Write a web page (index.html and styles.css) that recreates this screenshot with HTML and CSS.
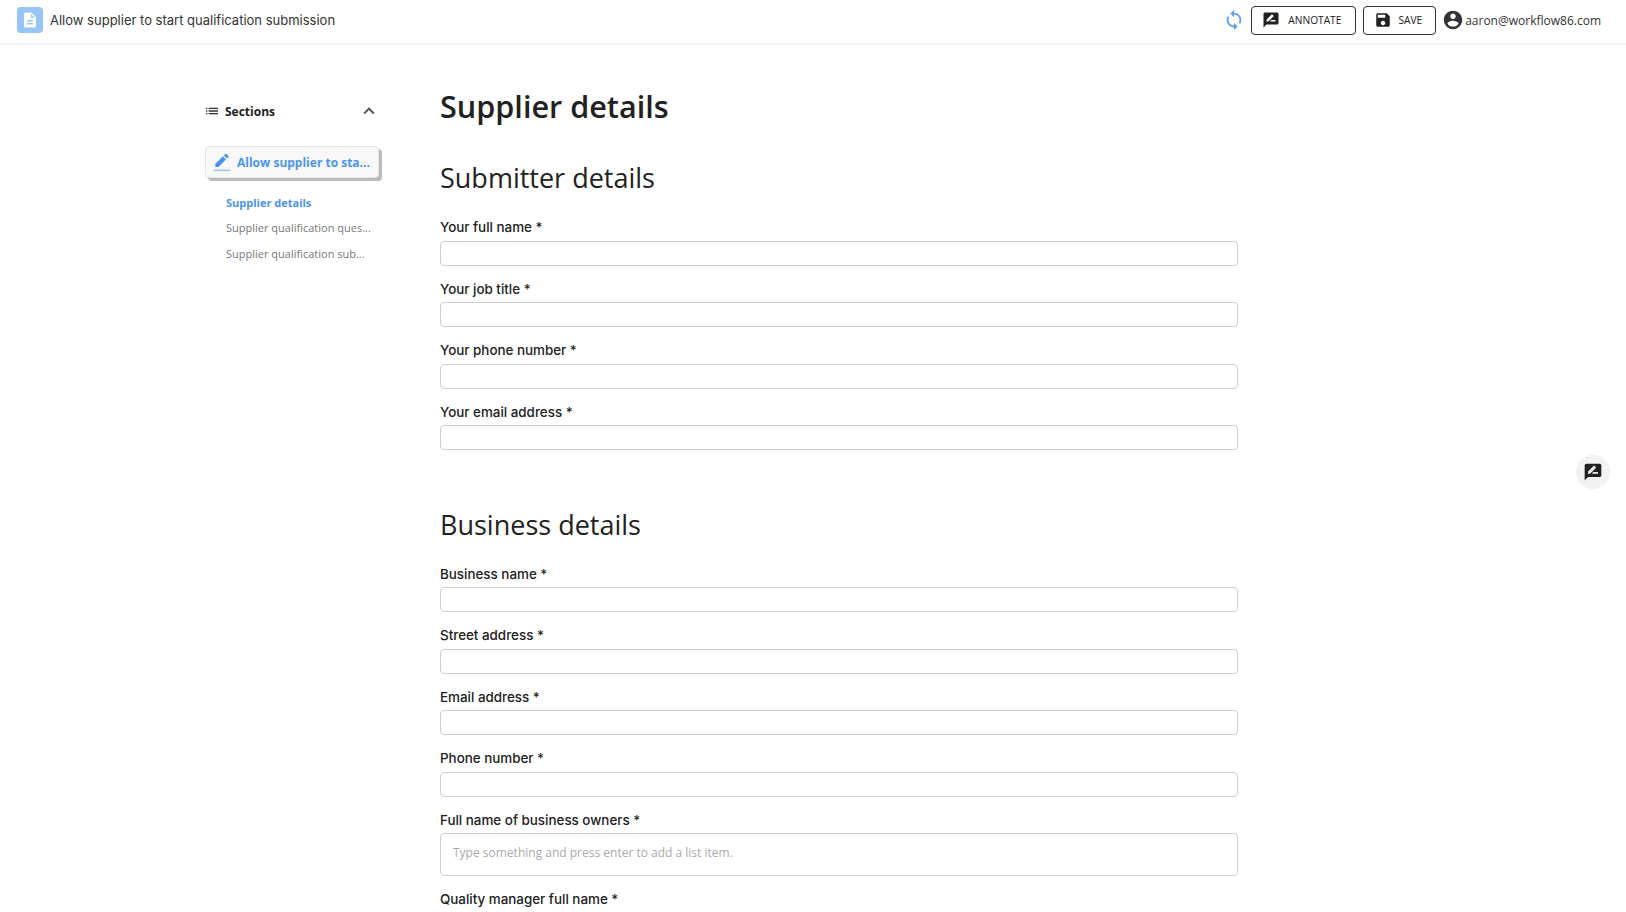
FILE: index.html
```html
<!doctype html>
<html>
  <head>
    <meta charset="utf-8">
    <title>Supplier details</title>
    <link rel="stylesheet" href="styles.css">
  </head>
  <body>
    <header class="topbar">
      <div class="doc_icon">
        <svg viewBox="0 0 24 24" width="18" height="18"><path fill="#fff" d="M14 2H6c-1.100 0-2 .9-2 2v16c0 1.100.9 2 2 2h12c1.100 0 2-.9 2-2V8l-6-6zm2 16H8v-2h8v2zm0-4H8v-2h8v2zm-3-5V3.500L18.500 9H13z"/></svg>
      </div>
      <span class="doc_title">Allow supplier to start qualification submission</span>
      <div class="top_actions">
        <svg class="sync" viewBox="0 0 24 24" width="22" height="22"><path fill="#5aa2f0" d="M12 4V1L8 5l4 4V6c3.310 0 6 2.690 6 6 0 1.010-.25 1.970-.7 2.800l1.460 1.460C19.540 15.030 20 13.570 20 12c0-4.420-3.580-8-8-8zm0 14c-3.310 0-6-2.690-6-6 0-1.010.25-1.970.7-2.800L5.240 7.740C4.460 8.970 4 10.430 4 12c0 4.420 3.580 8 8 8v3l4-4-4-4v3z"/></svg>
        <button class="top_btn">
          <svg viewBox="0 0 24 24" width="18" height="18"><path fill="#212121" d="M20 2H4c-1.100 0-2 .9-2 2v18l4-4h14c1.100 0 2-.9 2-2V4c0-1.100-.9-2-2-2zM8.500 14H6v-2.500l6.900-6.900c.2-.2.5-.2.7 0l1.800 1.800c.2.2.2.5 0 .7L8.500 14zM18 14h-7.500l2-2H18v2z"/></svg>
          ANNOTATE
        </button>
        <button class="top_btn save_btn">
          <svg viewBox="0 0 24 24" width="18" height="18"><path fill="#212121" d="M17 3H5c-1.110 0-2 .9-2 2v14c0 1.100.89 2 2 2h14c1.100 0 2-.9 2-2V7l-4-4zm-5 16c-1.660 0-3-1.340-3-3s1.340-3 3-3 3 1.340 3 3-1.340 3-3 3zm3-10H5V5h10v4z"/></svg>
          SAVE
        </button>
        <div class="user">
          <svg viewBox="0 0 24 24" width="22" height="22"><path fill="#333" d="M12 2C6.480 2 2 6.480 2 12s4.480 10 10 10 10-4.480 10-10S17.520 2 12 2zm0 3c1.660 0 3 1.340 3 3s-1.340 3-3 3-3-1.340-3-3 1.340-3 3-3zm0 14.200c-2.500 0-4.710-1.280-6-3.220.03-1.990 4-3.080 6-3.080 1.990 0 5.970 1.090 6 3.080-1.290 1.940-3.500 3.220-6 3.220z"/></svg>
          <span>aaron@workflow86.com</span>
        </div>
      </div>
    </header>

    <div class="wrapper">
      <aside class="sidebar">
        <div class="sections_head">
          <svg viewBox="0 0 24 24" width="16" height="16"><path fill="#333" d="M3 13h2v-2H3v2zm0 4h2v-2H3v2zm0-8h2V7H3v2zm4 4h14v-2H7v2zm0 4h14v-2H7v2zM7 7v2h14V7H7z"/></svg>
          <span class="sections_label">Sections</span>
          <svg class="chevron" viewBox="0 0 24 24" width="22" height="22"><path fill="#555" d="M7.410 15.410 12 10.830l4.590 4.580L18 14l-6-6-6 6z"/></svg>
        </div>
        <div class="current_section">
          <svg viewBox="0 0 24 24" width="20" height="20"><rect x="2" y="21" width="20" height="2" fill="#4a95ec" fill-opacity="0.5"/><path fill="#4a95ec" d="M13.060 5.190l3.750 3.750L7.750 18H4v-3.750l9.060-9.060zm4.810 2.690-3.750-3.750 1.830-1.830c.39-.39 1.020-.39 1.410 0l2.340 2.340c.39.39.39 1.020 0 1.410l-1.830 1.830z"/></svg>
          <span>Allow supplier to sta...</span>
        </div>
        <ul class="section_list">
          <li class="active">Supplier details</li>
          <li>Supplier qualification ques...</li>
          <li>Supplier qualification sub...</li>
        </ul>
      </aside>

      <main class="mainstuff">
        <h1>Supplier details</h1>
        <h2>Submitter details</h2>
        <label>Your full name *</label><div class="field"></div>
        <label>Your job title *</label><div class="field"></div>
        <label>Your phone number *</label><div class="field"></div>
        <label>Your email address *</label><div class="field"></div>

        <h2 class="second">Business details</h2>
        <label>Business name *</label><div class="field"></div>
        <label>Street address *</label><div class="field"></div>
        <label>Email address *</label><div class="field"></div>
        <label>Phone number *</label><div class="field"></div>
        <label>Full name of business owners *</label>
        <div class="field list_field">Type something and press enter to add a list item.</div>
        <label>Quality manager full name *</label>
      </main>
    </div>

    <button class="float_btn">
      <svg viewBox="0 0 24 24" width="20" height="20"><path fill="#212121" d="M20 2H4c-1.100 0-2 .9-2 2v18l4-4h14c1.100 0 2-.9 2-2V4c0-1.100-.9-2-2-2zM8.500 14H6v-2.500l6.900-6.900c.2-.2.5-.2.7 0l1.800 1.800c.2.2.2.5 0 .7L8.500 14zM18 14h-7.500l2-2H18v2z"/></svg>
    </button>
  </body>
</html>
```

FILE: styles.css
```css
html, body {
  margin: 0;
  height: 912px;
  overflow: hidden;
}

body {
  font-family: "Open Sans", sans-serif;
  color: #212121;
  background: #fff;
}

.topbar {
  display: flex;
  align-items: center;
  height: 40px;
  padding: 0 25px 3px 17px;
  border-bottom: 2px solid #f3f3f3;
}

.doc_icon {
  display: flex;
  align-items: center;
  justify-content: center;
  width: 26px;
  height: 26px;
  border-radius: 4px;
  background: #97c5f6;
}

.doc_title {
  margin-left: 7px;
  font-family: "Inter", sans-serif;
  font-size: 13px;
  color: #333;
}

.top_actions {
  display: flex;
  align-items: center;
  margin-left: auto;
  font-size: 12px;
  color: #333;
}

.sync {
  margin-right: 6px;
}

.top_btn {
  display: flex;
  align-items: center;
  gap: 8px;
  height: 29px;
  padding: 0 14px 0 10px;
  margin-right: 7px;
  border: 1px solid #333;
  border-radius: 4px;
  background: #fff;
  font-family: inherit;
  font-size: 10.200px;
  color: #212121;
}

.save_btn {
  gap: 6px;
  padding-right: 13px;
}

.user {
  display: flex;
  align-items: center;
  gap: 1px;
  margin-left: -1px;
}

.wrapper {
  display: flex;
}

.sidebar {
  width: 178px;
  margin: 54px 0 0 204px;
}

.sections_head {
  display: flex;
  align-items: center;
  gap: 5px;
  height: 24px;
  font-size: 12px;
}

.sections_label {
  font-weight: 700;
}

.chevron {
  margin-left: auto;
  margin-right: 2px;
}

.current_section {
  display: flex;
  align-items: center;
  gap: 5px;
  width: 174px;
  height: 32px;
  margin: 23px 0 0 1px;
  padding-left: 6px;
  box-sizing: border-box;
  border: 1px solid #e4e4e4;
  border-radius: 4px;
  background: #f8f8f8;
  font-size: 12px;
  font-weight: 700;
  white-space: nowrap;
  color: #4a95ec;
  box-shadow: 3px 3px 0 #bbb;
}

.section_list {
  margin: 11.700px 0 0;
  padding: 0 0 0 22px;
  list-style: none;
  font-size: 11px;
  color: #777;
}

.section_list li {
  height: 25.500px;
  line-height: 25.500px;
  white-space: nowrap;
}

.section_list .active {
  font-weight: 700;
  color: #4a95ec;
}

.mainstuff {
  width: 798px;
  margin-left: 58px;
}

h1 {
  margin: 39px 0 0;
  font-size: 30.600px;
  line-height: 44px;
  font-weight: 600;
}

h2 {
  margin: 29.500px 0 19.500px;
  font-size: 27px;
  line-height: 40px;
  font-weight: 400;
}

h2.second {
  margin: 55px 0 18.800px;
}

label {
  display: block;
  margin-top: 13px;
  font-family: "Inter", sans-serif;
  font-size: 13.400px;
  line-height: 20px;
  font-weight: 500;
}

.field {
  height: 25px;
  margin-top: 3.500px;
  box-sizing: border-box;
  border: 1px solid #cfcfcf;
  border-radius: 4px;
}

.list_field {
  height: 43px;
  padding: 10px 12px 0;
  font-size: 12px;
  line-height: 18px;
  color: #aaa;
}

.float_btn {
  position: absolute;
  top: 455px;
  right: 16px;
  display: flex;
  align-items: center;
  justify-content: center;
  width: 34px;
  height: 34px;
  padding: 0;
  border: 0;
  border-radius: 50%;
  background: #f2f2f2;
}
```
